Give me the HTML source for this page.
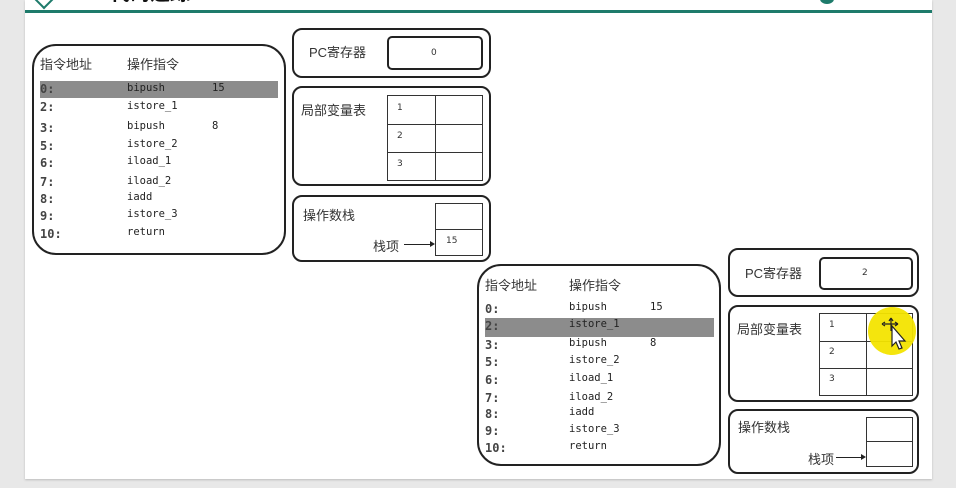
<!DOCTYPE html>
<html><head><meta charset="utf-8"><style>
*{margin:0;padding:0;box-sizing:border-box}
body{width:956px;height:488px;background:#e8e8e8;position:relative;overflow:hidden;font-family:"Liberation Sans","Noto Sans CJK SC",sans-serif;color:#222}
.a{position:absolute}
.slide{left:25px;top:0;width:907px;height:479px;background:#fff;box-shadow:0 1px 2px #bbb}
.box{position:absolute;border:2px solid #222;border-radius:10px}
.big{border-radius:24px}
.cell{position:absolute;border:1px solid #333}
.t{position:absolute;font-size:13px;white-space:nowrap;color:#333}
.m{position:absolute;font-family:"DejaVu Sans Mono",monospace;font-size:10.5px;white-space:nowrap;color:#222}
.ad{position:absolute;font-family:"DejaVu Sans Mono",monospace;font-size:12px;font-weight:bold;color:#444;white-space:nowrap}
.hl{position:absolute;background:#8c8c8c}
.s{position:absolute;font-size:9px;font-family:"DejaVu Sans",sans-serif;color:#333}
</style></head><body>
<div class="a slide"></div>
<div class="a" style="left:25px;top:10px;width:907px;height:3px;background:#1e7b6b"></div>
<div class="a" style="left:36px;top:-10px;width:16px;height:16px;border-right:2px solid #1e7b6b;border-bottom:2px solid #1e7b6b;transform:rotate(45deg)"></div>
<div class="a" style="left:110px;top:-23px;font-size:20px;font-weight:bold;color:#111;font-family:'Noto Sans CJK SC',sans-serif">代码追踪</div>
<div class="a" style="left:820px;top:-6px;width:14px;height:10px;border-radius:50%;background:#1e7b6b"></div>

<!-- Set 1 -->
<div class="box big" style="left:32px;top:44px;width:254px;height:211px"></div>
<div class="t" style="left:40px;top:54px">指令地址</div>
<div class="t" style="left:127px;top:54px">操作指令</div>
<div class="hl" style="left:40px;top:81px;width:238px;height:17px"></div>
<div class="ad" style="left:40px;top:82px">0:</div><div class="m" style="left:127px;top:82px">bipush</div><div class="m" style="left:212px;top:82px">15</div>
<div class="ad" style="left:40px;top:100px">2:</div><div class="m" style="left:127px;top:100px">istore_1</div>
<div class="ad" style="left:40px;top:121px">3:</div><div class="m" style="left:127px;top:120px">bipush</div><div class="m" style="left:212px;top:120px">8</div>
<div class="ad" style="left:40px;top:139px">5:</div><div class="m" style="left:127px;top:138px">istore_2</div>
<div class="ad" style="left:40px;top:156px">6:</div><div class="m" style="left:127px;top:155px">iload_1</div>
<div class="ad" style="left:40px;top:175px">7:</div><div class="m" style="left:127px;top:175px">iload_2</div>
<div class="ad" style="left:40px;top:192px">8:</div><div class="m" style="left:127px;top:191px">iadd</div>
<div class="ad" style="left:40px;top:209px">9:</div><div class="m" style="left:127px;top:208px">istore_3</div>
<div class="ad" style="left:40px;top:227px">10:</div><div class="m" style="left:127px;top:226px">return</div>

<div class="box" style="left:292px;top:28px;width:199px;height:50px"></div>
<div class="t" style="left:309px;top:42px">PC寄存器</div>
<div class="box" style="left:387px;top:36px;width:96px;height:34px;border-radius:5px"></div>
<div class="s" style="left:431px;top:48px">0</div>

<div class="box" style="left:292px;top:86px;width:199px;height:100px"></div>
<div class="t" style="left:301px;top:100px">局部变量表</div>
<div class="cell" style="left:387px;top:95px;width:49px;height:30px"></div><div class="cell" style="left:435px;top:95px;width:48px;height:30px"></div>
<div class="cell" style="left:387px;top:124px;width:49px;height:29px"></div><div class="cell" style="left:435px;top:124px;width:48px;height:29px"></div>
<div class="cell" style="left:387px;top:152px;width:49px;height:29px"></div><div class="cell" style="left:435px;top:152px;width:48px;height:29px"></div>
<div class="s" style="left:397px;top:103px">1</div><div class="s" style="left:397px;top:131px">2</div><div class="s" style="left:397px;top:159px">3</div>

<div class="box" style="left:292px;top:195px;width:199px;height:67px"></div>
<div class="t" style="left:303px;top:205px">操作数栈</div>
<div class="cell" style="left:435px;top:203px;width:48px;height:27px"></div>
<div class="cell" style="left:435px;top:229px;width:48px;height:27px"></div>
<div class="s" style="left:446px;top:236px">15</div>
<div class="t" style="left:373px;top:236px">栈项</div>
<div class="a" style="left:404px;top:244px;width:28px;height:1px;background:#222"></div>
<div class="a" style="left:430px;top:241px;border-left:5px solid #222;border-top:3px solid transparent;border-bottom:3px solid transparent"></div>

<!-- Set 2 -->
<div class="box big" style="left:477px;top:264px;width:244px;height:202px"></div>
<div class="t" style="left:485px;top:275px">指令地址</div>
<div class="t" style="left:569px;top:275px">操作指令</div>
<div class="hl" style="left:485px;top:318px;width:229px;height:19px"></div>
<div class="ad" style="left:485px;top:302px">0:</div><div class="m" style="left:569px;top:301px">bipush</div><div class="m" style="left:650px;top:301px">15</div>
<div class="ad" style="left:485px;top:319px">2:</div><div class="m" style="left:569px;top:318px">istore_1</div>
<div class="ad" style="left:485px;top:338px">3:</div><div class="m" style="left:569px;top:337px">bipush</div><div class="m" style="left:650px;top:337px">8</div>
<div class="ad" style="left:485px;top:355px">5:</div><div class="m" style="left:569px;top:354px">istore_2</div>
<div class="ad" style="left:485px;top:373px">6:</div><div class="m" style="left:569px;top:372px">iload_1</div>
<div class="ad" style="left:485px;top:391px">7:</div><div class="m" style="left:569px;top:391px">iload_2</div>
<div class="ad" style="left:485px;top:407px">8:</div><div class="m" style="left:569px;top:406px">iadd</div>
<div class="ad" style="left:485px;top:424px">9:</div><div class="m" style="left:569px;top:423px">istore_3</div>
<div class="ad" style="left:485px;top:441px">10:</div><div class="m" style="left:569px;top:440px">return</div>

<div class="box" style="left:728px;top:248px;width:191px;height:49px"></div>
<div class="t" style="left:745px;top:263px">PC寄存器</div>
<div class="box" style="left:819px;top:257px;width:94px;height:33px;border-radius:5px"></div>
<div class="s" style="left:862px;top:268px">2</div>

<div class="box" style="left:728px;top:305px;width:191px;height:97px"></div>
<div class="t" style="left:737px;top:319px">局部变量表</div>
<div class="cell" style="left:819px;top:313px;width:48px;height:29px"></div><div class="cell" style="left:866px;top:313px;width:47px;height:29px"></div>
<div class="cell" style="left:819px;top:341px;width:48px;height:28px"></div><div class="cell" style="left:866px;top:341px;width:47px;height:28px"></div>
<div class="cell" style="left:819px;top:368px;width:48px;height:28px"></div><div class="cell" style="left:866px;top:368px;width:47px;height:28px"></div>
<div class="s" style="left:829px;top:320px">1</div><div class="s" style="left:829px;top:347px">2</div><div class="s" style="left:829px;top:374px">3</div>

<div class="box" style="left:728px;top:409px;width:191px;height:65px"></div>
<div class="t" style="left:738px;top:417px">操作数栈</div>
<div class="cell" style="left:866px;top:417px;width:47px;height:25px"></div>
<div class="cell" style="left:866px;top:441px;width:47px;height:26px"></div>
<div class="t" style="left:808px;top:449px">栈项</div>
<div class="a" style="left:836px;top:457px;width:27px;height:1px;background:#222"></div>
<div class="a" style="left:861px;top:454px;border-left:5px solid #222;border-top:3px solid transparent;border-bottom:3px solid transparent"></div>

<div class="a" style="left:868px;top:307px;width:48px;height:48px;border-radius:50%;background:#f3e400;opacity:.95"></div>
<svg class="a" style="left:878px;top:316px" width="36" height="38" viewBox="0 0 36 38">
<path d="M6 8h14M13 2v13M4 8l3-2M4 8l3 2M20 8l-3-2M20 8l-3 2M13 2l-2 3M13 2l2 3" stroke="#222" stroke-width="1.2" fill="none"/>
<path d="M14 10 L14 30 L18 26 L21 33 L24 32 L21 25 L27 25 Z" fill="#fff" stroke="#222" stroke-width="1.2"/>
</svg>
</body></html>
